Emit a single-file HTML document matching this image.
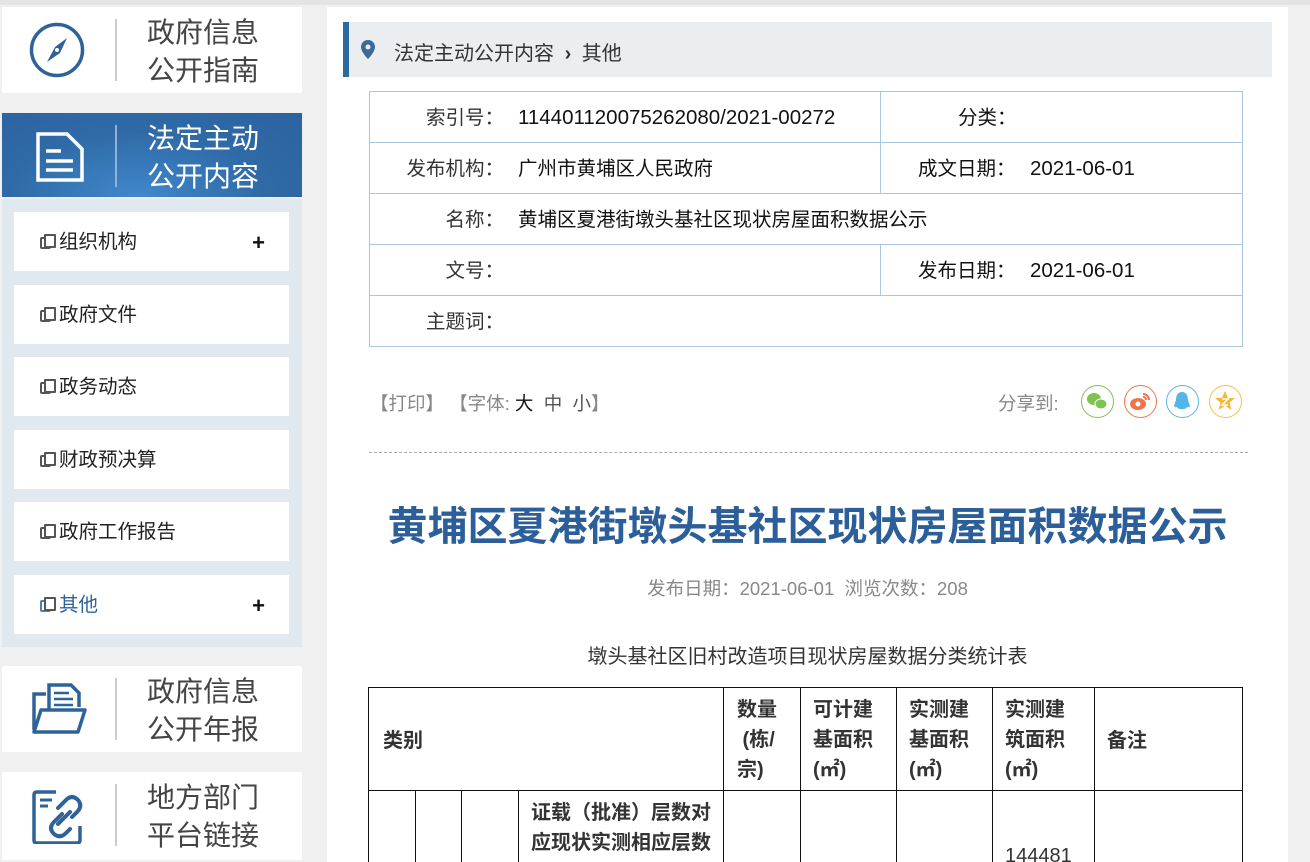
<!DOCTYPE html>
<html style="width:1310px;height:862px;overflow:hidden"><head><meta charset="utf-8">
<style>
*{margin:0;padding:0;box-sizing:border-box}
body{width:1310px;height:862px;overflow:hidden;background:#f0f0f0;font-family:"Liberation Sans","Noto Sans CJK SC",sans-serif;position:relative;color:#333}
.a{position:absolute}
.box{position:absolute;left:2px;width:300px;background:#fff}
.box .div{position:absolute;left:113px;top:12px;width:2px;height:62px;background:#ccc}
.box .t{position:absolute;left:145px;top:7px;font-size:28px;line-height:38px;color:#444}
.sub{position:absolute;left:14px;width:275px;height:59px;background:#fff;font-size:19.5px;line-height:61px;padding-left:26px;color:#222}
.sub .ic{display:inline-block;width:11px;height:12px;border:2px solid #555;border-radius:2px;position:relative;margin-right:8px;vertical-align:-1px}
.sub .ic:after{content:"";position:absolute;left:2px;top:-5px;width:8px;height:10px;border:2px solid #555;background:#fff;border-radius:1px}
.sub .p{position:absolute;right:24px;top:0;font-size:22px;font-weight:bold;color:#111}
.row{position:absolute;left:369px;width:874px;height:51px;border:1px solid #a9c8e0;border-top:none;font-size:19.5px}
.row span{position:absolute;top:13px;line-height:26px}
.l{right:745px;text-align:right}
.v{left:148px;color:#111}
.num{font-size:20.5px}
.r{left:548px;color:#111}
.rv{left:660px;color:#111}
.vl{position:absolute;left:510px;top:0;width:1px;height:50px;background:#a9c8e0}
.circ{position:absolute;width:33px;height:33px;border-radius:50%;border:1.5px solid;top:385px}
.th{position:absolute;font-size:20px;font-weight:bold;color:#333;line-height:30px}
</style></head><body>
<div class="a" style="left:0;top:0;width:1310px;height:5px;background:#e4e4e6"></div>

<div class="box" style="top:7px;height:86px">
 <svg class="a" style="left:27px;top:15px" width="56" height="56" viewBox="0 0 56 56"><circle cx="28" cy="28" r="25.5" fill="none" stroke="#2e6399" stroke-width="3.5"/><path d="M18 40 L26 25 L38 16 L31 31 Z" fill="#2e6399"/><circle cx="28" cy="28" r="2" fill="#fff"/></svg>
 <div class="div"></div><div class="t">政府信息<br>公开指南</div>
</div>
<div class="box" style="top:113px;height:84px;background:radial-gradient(ellipse at 45% 100%,#4088cc 0%,#2f6aa6 55%,#2c62a0 100%)">
 <svg class="a" style="left:33px;top:18px" width="50" height="52" viewBox="0 0 50 52"><path d="M3 3 H32 L47 18 V49 H3 Z" fill="none" stroke="#fff" stroke-width="3.5"/><path d="M11 20 H26 M11 30 H38 M11 39 H38" stroke="#fff" stroke-width="3.5"/></svg>
 <div class="div" style="background:#8fb2d6"></div><div class="t" style="color:#fff">法定主动<br>公开内容</div>
</div>
<div class="a" style="left:2px;top:199px;width:300px;height:448px;background:#dfe9ef"></div>
<div class="sub" style="top:212px"><i class="ic"></i>组织机构<span class="p">+</span></div>
<div class="sub" style="top:285px"><i class="ic"></i>政府文件</div>
<div class="sub" style="top:357px"><i class="ic"></i>政务动态</div>
<div class="sub" style="top:430px"><i class="ic"></i>财政预决算</div>
<div class="sub" style="top:502px"><i class="ic"></i>政府工作报告</div>
<div class="sub" style="top:575px;color:#2e6399"><i class="ic" style="border-color:#4a80b8"></i>其他<span class="p">+</span></div>
<div class="box" style="top:666px;height:86px">
 <svg class="a" style="left:29px;top:14px" width="58" height="58" viewBox="0 0 58 58"><path d="M3 50 V14 H15" fill="none" stroke="#2e6399" stroke-width="3.5"/><path d="M18 30 V5 H40 L48 13 V27" fill="none" stroke="#2e6399" stroke-width="3.5"/><path d="M23 13 H38 M23 19 H42 M23 25 H42" stroke="#2e6399" stroke-width="2.5"/><path d="M3 52 L10 30 H54 L47 52 Z" fill="none" stroke="#2e6399" stroke-width="3.5" stroke-linejoin="round"/></svg>
 <div class="div"></div><div class="t">政府信息<br>公开年报</div>
</div>
<div class="box" style="top:772px;height:88px">
 <svg class="a" style="left:30px;top:16px" width="54" height="56" viewBox="0 0 54 56"><path d="M24 4 H5 Q2 4 2 7 V52 Q2 55 5 55 H45 Q48 55 48 52 V38" fill="none" stroke="#2e6399" stroke-width="3.5"/><path d="M8 12 H20 M8 18 H16" stroke="#2e6399" stroke-width="3"/><path d="M26 20 L34 12 Q40 6 46 12 Q51 18 45 24 L40 29 M30 26 L22 34 Q16 40 22 46 Q28 51 34 45 L38 41 M26 36 L38 24" fill="none" stroke="#2e6399" stroke-width="4" stroke-linecap="round"/></svg>
 <div class="div"></div><div class="t">地方部门<br>平台链接</div>
</div>

<div class="a" style="left:327px;top:7px;width:961px;height:860px;background:#fff"></div>
<div class="a" style="left:343px;top:22px;width:929px;height:55px;background:#ebeef1;border-left:6px solid #2c6aa0"></div>
<svg class="a" style="left:361px;top:40px" width="14" height="19" viewBox="0 0 14 19"><path d="M7 0 C3 0 0 3 0 7 C0 12 7 19 7 19 C7 19 14 12 14 7 C14 3 11 0 7 0 Z" fill="#3a6b99"/><circle cx="7" cy="7" r="2.5" fill="#ebeef1"/></svg>
<div class="a" style="left:394px;top:37px;font-size:20px;color:#333">法定主动公开内容 <span style="margin:0 5px;font-weight:bold">›</span> 其他</div>

<div class="a" style="left:369px;top:91px;width:874px;height:1px;background:#a9c8e0"></div>
<div class="row" style="top:92px"><span class="l" style="right:738px">索引号：</span><span class="v num">114401120075262080/2021-00272</span><i class="vl"></i><span class="r" style="left:588px">分类：</span></div>
<div class="row" style="top:143px"><span class="l" style="right:738px">发布机构：</span><span class="v">广州市黄埔区人民政府</span><i class="vl"></i><span class="r">成文日期：</span><span class="rv num">2021-06-01</span></div>
<div class="row" style="top:194px"><span class="l" style="right:738px">名称：</span><span class="v">黄埔区夏港街墩头基社区现状房屋面积数据公示</span></div>
<div class="row" style="top:245px"><span class="l" style="right:738px">文号：</span><i class="vl"></i><span class="r">发布日期：</span><span class="rv num">2021-06-01</span></div>
<div class="row" style="top:296px"><span class="l" style="right:738px">主题词：</span></div>

<div class="a" style="left:370px;top:390px;font-size:18.5px;color:#888">【打印】 【字体: <span style="color:#111">大</span> <span style="color:#555">&nbsp;中&nbsp; 小</span>】</div>
<div class="a" style="left:998px;top:390px;font-size:18.5px;color:#888">分享到:</div>
<div class="circ" style="left:1081px;border-color:#7dc252"><svg width="30" height="30" viewBox="0 0 30 30"><ellipse cx="12" cy="13" rx="7" ry="6" fill="#7dc252"/><ellipse cx="19" cy="18" rx="6" ry="5" fill="#7dc252" stroke="#fff" stroke-width="1"/></svg></div>
<div class="circ" style="left:1124px;border-color:#f07447"><svg width="30" height="30" viewBox="0 0 30 30"><ellipse cx="13" cy="18" rx="8" ry="6" fill="#f07447"/><circle cx="13" cy="18" r="2.5" fill="#fff"/><path d="M18 8 A6 6 0 0 1 24 14 M18 11 A3 3 0 0 1 21 14" fill="none" stroke="#f07447" stroke-width="2"/></svg></div>
<div class="circ" style="left:1166px;border-color:#57b4e6"><svg width="30" height="30" viewBox="0 0 30 30"><path d="M15 6 C10 6 9 11 9 14 L7 20 C8 22 10 21 10 21 C11 24 19 24 20 21 C20 21 22 22 23 20 L21 14 C21 11 20 6 15 6 Z" fill="#57b4e6"/></svg></div>
<div class="circ" style="left:1209px;border-color:#f7c143"><svg width="30" height="30" viewBox="0 0 30 30"><path d="M15 5 L18 12 L25 12 L19.5 16.5 L21.5 24 L15 19.5 L8.5 24 L10.5 16.5 L5 12 L12 12 Z" fill="#f7b533"/><path d="M12 13 H18 L12 19 H18" stroke="#fff" stroke-width="1.6" fill="none"/></svg></div>

<div class="a" style="left:369px;top:452px;width:879px;border-top:1px dashed #aaa"></div>
<div class="a" style="left:327px;top:494px;width:961px;text-align:center;font-size:40px;font-weight:bold;color:#2c5f99;white-space:nowrap">黄埔区夏港街墩头基社区现状房屋面积数据公示</div>
<div class="a" style="left:327px;top:575px;width:961px;text-align:center;font-size:18.5px;color:#888">发布日期：2021-06-01 &nbsp;浏览次数：208</div>
<div class="a" style="left:327px;top:640px;width:961px;text-align:center;font-size:20px;color:#333">墩头基社区旧村改造项目现状房屋数据分类统计表</div>

<div class="a" style="left:368px;top:687px;width:875px;height:200px;border:1px solid #111"></div>
<div class="a" style="left:368px;top:790px;width:875px;height:1px;background:#111"></div>
<div class="a" style="left:723px;top:687px;width:1px;height:200px;background:#111"></div>
<div class="a" style="left:800px;top:687px;width:1px;height:200px;background:#111"></div>
<div class="a" style="left:896px;top:687px;width:1px;height:200px;background:#111"></div>
<div class="a" style="left:992px;top:687px;width:1px;height:200px;background:#111"></div>
<div class="a" style="left:1094px;top:687px;width:1px;height:200px;background:#111"></div>
<div class="a" style="left:415px;top:790px;width:1px;height:100px;background:#111"></div>
<div class="a" style="left:461px;top:790px;width:1px;height:100px;background:#111"></div>
<div class="a" style="left:518px;top:790px;width:1px;height:100px;background:#111"></div>
<div class="th" style="left:383px;top:726px">类别</div>
<div class="th" style="left:737px;top:695px">数量<br>&nbsp;(栋/<br>宗)</div>
<div class="th" style="left:813px;top:695px">可计建<br>基面积<br>(㎡)</div>
<div class="th" style="left:909px;top:695px">实测建<br>基面积<br>(㎡)</div>
<div class="th" style="left:1005px;top:695px">实测建<br>筑面积<br>(㎡)</div>
<div class="th" style="left:1107px;top:726px">备注</div>
<div class="th" style="left:531px;top:798px">证载（批准）层数对<br>应现状实测相应层数</div>
<div class="a" style="left:1005px;top:845px;font-size:20px;color:#333">144481</div>
</body></html>
